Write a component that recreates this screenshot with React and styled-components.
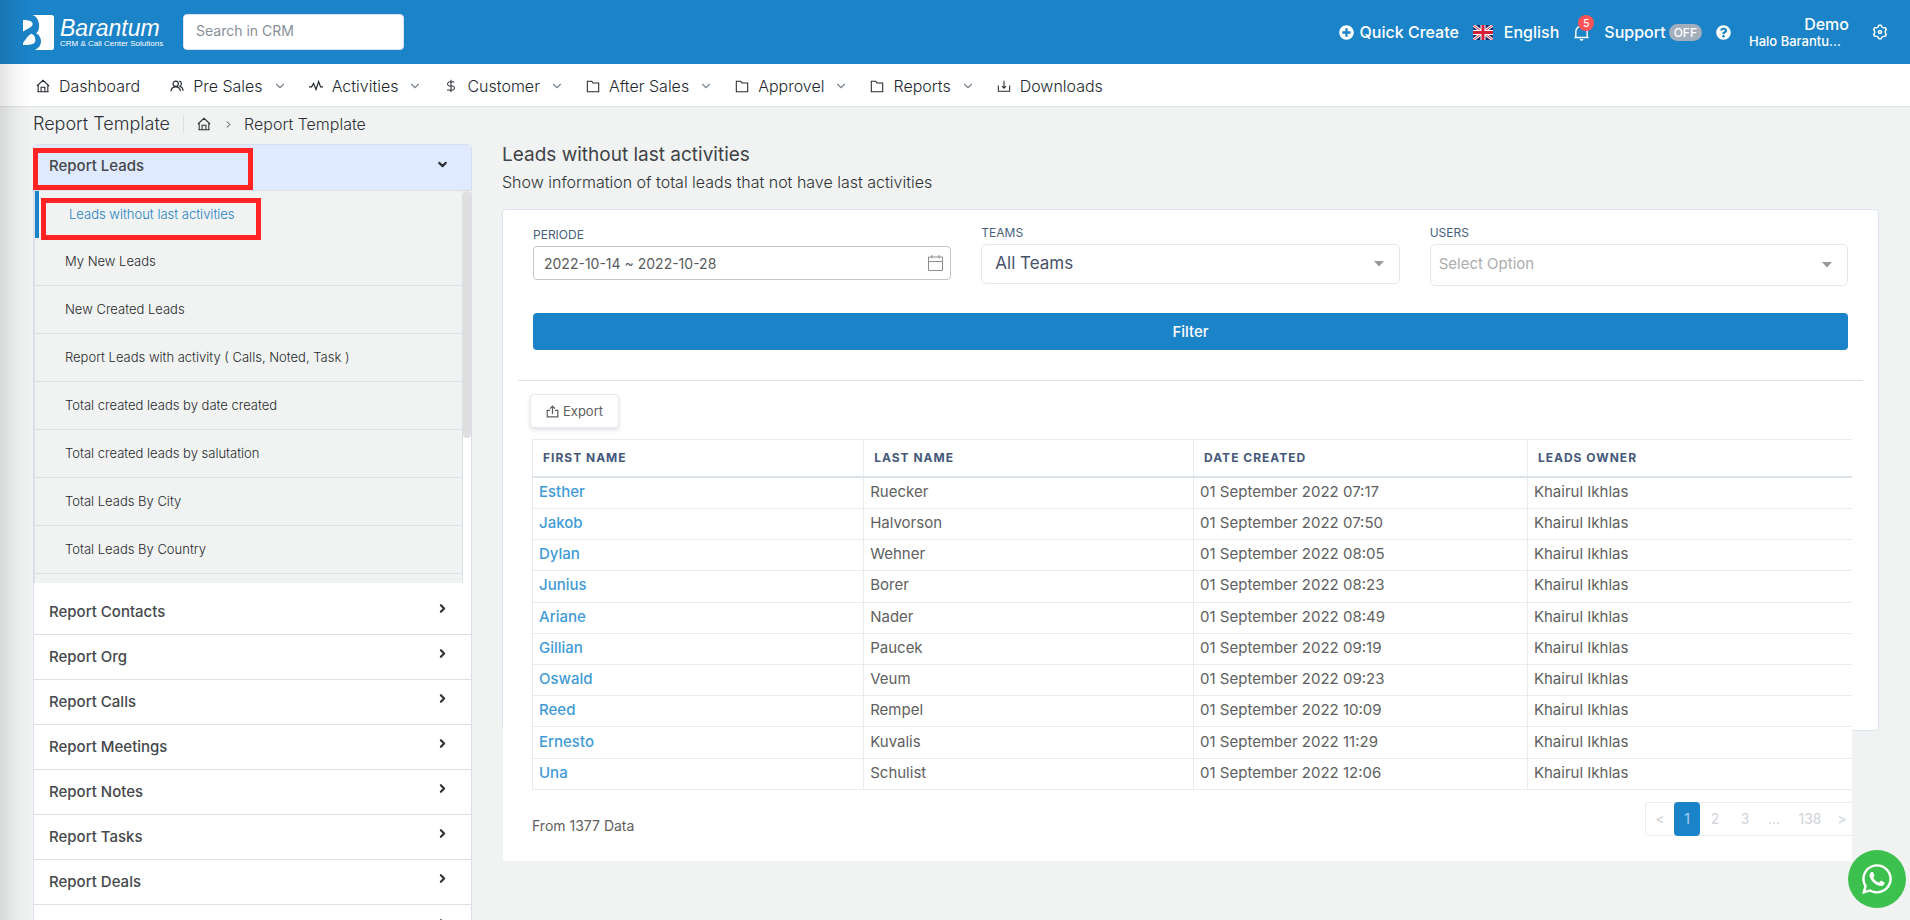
import React from "react";
import styled, { createGlobalStyle } from "styled-components";
import { FaPlusCircle, FaQuestionCircle, FaWhatsapp } from "react-icons/fa";
import { RiNotification2Line, RiSettings3Line } from "react-icons/ri";
import { LuChevronDown, LuChevronRight, LuDollarSign } from "react-icons/lu";

const GlobalStyle = createGlobalStyle`
  *, *::before, *::after { box-sizing: border-box; }
  body {
    margin: 0;
    background: #f1f3f2;
    color: #3f4347;
    font-family: Inter, "Open Sans", sans-serif;
    font-size: 15px;
    line-height: 20px;
  }
  button, input, select { font: inherit; color: inherit; margin: 0; }
  a { color: inherit; text-decoration: none; }
  h1, h2, p, ul { margin: 0; padding: 0; font-weight: inherit; }
  ul { list-style: none; }
  svg { display: block; flex: none; }
`;

const Page = styled.div`
  position: relative;
  display: flex;
  flex-direction: column;
  height: 100vh;
  overflow: hidden;
`;

const EdgeShade = styled.div`
  position: absolute;
  inset: 0 auto 0 0;
  width: 32px;
  pointer-events: none;
  background: linear-gradient(to right, rgba(0, 0, 0, 0.11), rgba(0, 0, 0, 0.03) 50%, transparent);
`;

/* ---------- top bar ---------- */

const TopBar = styled.header`
  flex: none;
  display: flex;
  align-items: center;
  height: 64px;
  padding: 0 21px 0 23px;
  background: #1b83c8;
  color: #fff;
`;

const Brand = styled.a`
  display: flex;
  align-items: center;
  gap: 6px;
  width: 160px;
`;

const BrandText = styled.span`
  display: flex;
  flex-direction: column;
  font-family: "Liberation Sans", Arial, sans-serif;
  white-space: nowrap;
`;

const BrandName = styled.span`
  font-size: 23px;
  line-height: 24px;
  font-style: italic;
`;

const BrandTag = styled.span`
  font-size: 8px;
  line-height: 8px;
`;

const Search = styled.input`
  width: 221px;
  height: 36px;
  padding: 0 12px 3px;
  border: 1px solid #dbe3ee;
  border-radius: 4px;
  background: #fff;
  color: #3f4347;
  font-size: 14px;
  &::placeholder { color: #878f9a; opacity: 1; }
`;

const Tools = styled.div`
  display: flex;
  align-items: center;
  margin-left: auto;
  font-size: 16px;
  font-weight: 500;
`;

const ToolButton = styled.button`
  position: relative;
  display: flex;
  align-items: center;
  gap: ${(p) => p.$gap || 6}px;
  padding: 0;
  margin-left: ${(p) => p.$space || 14}px;
  border: 0;
  background: none;
  cursor: pointer;
`;

const Badge = styled.span`
  position: absolute;
  top: -9px;
  left: 5px;
  width: 16px;
  height: 16px;
  border-radius: 8px;
  background: #ff5457;
  font-size: 10px;
  line-height: 16px;
  text-align: center;
`;

const Pill = styled.span`
  padding: 0 5px;
  border-radius: 9px;
  background: #a3afbd;
  font-size: 12px;
  line-height: 17px;
`;

const Account = styled.a`
  display: flex;
  flex-direction: column;
  width: 100px;
  margin-left: 18px;
  font-size: 16px;
  line-height: 18px;
  text-align: right;
`;

const Company = styled.span`
  font-size: 13px;
  line-height: 16px;
  text-align: left;
`;

/* ---------- navigation ---------- */

const Nav = styled.nav`
  flex: none;
  display: flex;
  align-items: center;
  gap: 22px;
  height: 43px;
  padding: 2px 36px 0;
  border-bottom: 1px solid #dce0e6;
  background: #fff;
  color: #24292f;
  font-size: 16px;
  font-weight: 300;
`;

const NavLink = styled.a`
  display: flex;
  align-items: center;
  white-space: nowrap;
  &:first-child { margin-right: 8px; }
  & > svg:last-child:not(:first-child) { margin-left: 10px; color: #7c8896; }
`;

const NavLabel = styled.span`
  margin-left: 9px;
`;

const Crumbs = styled.nav`
  flex: none;
  display: flex;
  align-items: center;
  height: 37px;
  padding: 0 33px 3px;
  color: #2e3236;
  font-size: 16px;
  font-weight: 300;
`;

const CrumbTitle = styled.h1`
  margin-right: 13px;
  font-size: 18px;
`;

const CrumbHome = styled.a`
  display: flex;
  padding: 2px 12px 2px 13px;
  border-left: 1px solid #dadfe3;
`;

const CrumbHere = styled.span`
  margin-left: 10px;
`;

/* ---------- sidebar ---------- */

const Body = styled.div`
  flex: 1;
  min-height: 0;
  display: flex;
  align-items: flex-start;
  gap: 30px;
  padding: 0 31px 0 33px;
`;

const Sidebar = styled.aside`
  flex: none;
  width: 439px;
  border: 1px solid #d8dfea;
  border-radius: 4px;
  background: #fff;
`;

const Group = styled.button`
  display: flex;
  align-items: center;
  justify-content: space-between;
  width: 100%;
  height: 45px;
  padding: 0 22px 0 15px;
  border: 0;
  border-bottom: 1px solid #dcdfe5;
  background: #fff;
  color: #45484c;
  font-weight: 500;
  text-align: left;
  cursor: pointer;
  & > svg { margin-bottom: 8px; color: #303236; }
`;

const OpenGroup = styled(Group)`
  height: 46px;
  padding-bottom: 3px;
  background: #e0eaff;
  & > svg { margin-bottom: 4px; }
`;

const ReportScroller = styled.div`
  display: flex;
  height: 392px;
  margin-bottom: 7px;
  overflow: hidden;
`;

const ReportList = styled.ul`
  flex: 1;
  border-left: 1px solid #dcdfe8;
  border-right: 1px solid #dcdfe8;
`;

const ReportItem = styled.li`
  height: ${(p) => (p.$active ? 47 : 48)}px;
  border-bottom: ${(p) => (p.$active ? "0" : "1px solid #dcdfe5")};
  border-left: ${(p) => (p.$active ? "4px solid #1b83c8" : "0")};
  background: #f1f3f2;
  color: ${(p) => (p.$active ? "#1b7fc2" : "#26292c")};
`;

const ReportLink = styled.a`
  display: block;
  padding: 13px 30px;
  font-size: 13px;
  font-weight: 300;
`;

const Thumb = styled.div`
  width: 8px;
  height: 247px;
  border-radius: 4px;
  background: #dfdfdf;
`;

/* Red frames that point out the menu entries. */
const Marker = styled.div`
  position: absolute;
  top: ${(p) => p.$top}px;
  left: ${(p) => p.$left}px;
  width: 220px;
  height: 42px;
  border: 5px solid #ff2323;
  pointer-events: none;
`;

/* ---------- report ---------- */

const Main = styled.main`
  flex: 1;
  min-width: 0;
`;

const Title = styled.h2`
  font-size: 19px;
  line-height: 22px;
`;

const Subtitle = styled.p`
  margin: 6px 0 17px;
  color: #2e3236;
  font-size: 16px;
  font-weight: 300;
`;

const Card = styled.section`
  border: 1px solid #dbe3ee;
  border-radius: 4px;
  background: #fff;
`;

const Filters = styled.form`
  display: grid;
  grid-template-columns: repeat(3, 1fr);
  column-gap: 30px;
  row-gap: 27px;
  margin: 0 15px;
  padding: 14px 15px 30px;
  border-bottom: 1px solid #dcdfe5;
`;

const Field = styled.div`
  display: flex;
  flex-direction: column;
  padding-top: ${(p) => p.$drop || 0}px;
`;

const Label = styled.label`
  padding-bottom: 2px;
  color: #48607c;
  font-size: 12px;
  line-height: 18px;
`;

const Control = styled.div`
  position: relative;
  & > svg { position: absolute; top: 50%; right: ${(p) => p.$inset}px; transform: translateY(-50%); pointer-events: none; }
`;

const DateInput = styled.input`
  display: block;
  width: 100%;
  height: 34px;
  padding: 0 10px;
  border: 1px solid #c4c4c4;
  border-radius: 4px;
  background: #fff;
  color: #5a5c5e;
  font-size: 14px;
`;

const Select = styled.select`
  display: block;
  appearance: none;
  width: 100%;
  height: ${(p) => (p.$empty ? 42 : 40)}px;
  padding: 0 ${(p) => (p.$empty ? 8 : 13)}px 2px;
  border: 1px solid #e6e8ea;
  border-radius: 5px;
  background: #fff;
  color: ${(p) => (p.$empty ? "#adadad" : "#47536a")};
  font-size: ${(p) => (p.$empty ? 15 : 17)}px;
`;

const FilterButton = styled.button`
  grid-column: 1 / -1;
  height: 37px;
  border: 0;
  border-radius: 4px;
  background: #1b83c8;
  color: #fff;
  font-weight: 500;
  cursor: pointer;
`;

/* The results are taller than the card and run out below it. */
const Results = styled.div`
  margin: 0 26px -131px 0;
  padding: 13px 0 25px 27px;
  background: #fff;
  color: #606060;
`;

const ExportButton = styled.button`
  display: flex;
  align-items: center;
  gap: 4px;
  height: 34px;
  padding: 0 15px;
  border: 1px solid #e6e9ee;
  border-radius: 4px;
  background: #fff;
  box-shadow: 0 2px 4px rgba(80, 90, 110, 0.18);
  font-size: 13px;
  cursor: pointer;
`;

const Table = styled.table`
  width: calc(100% - 2px);
  height: 351px;
  margin: 11px 0 0 2px;
  border-collapse: collapse;
  table-layout: fixed;
`;

const Col = styled.col`
  width: ${(p) => p.$w};
`;

const HeadCell = styled.th`
  height: 37px;
  padding: 0 10px;
  border: 1px solid #e8ebef;
  border-right: 0;
  border-bottom: 2px solid #dce2ea;
  color: #45597a;
  font-size: 12px;
  font-weight: 700;
  letter-spacing: 1px;
  text-align: left;
`;

const Cell = styled.td`
  padding: 0 6px 2px;
  border: 1px solid #e8ebef;
  border-right: 0;
`;

const NameLink = styled.a`
  color: #3f9bd6;
  font-weight: 500;
`;

const TableFoot = styled.div`
  display: flex;
  justify-content: space-between;
  align-items: flex-start;
  padding: 12px 0 0 2px;
`;

const Total = styled.p`
  padding-top: 14px;
  font-size: 14px;
`;

const Pager = styled.nav`
  display: flex;
  align-items: center;
  height: 34px;
  border: 1px solid #eaedf0;
  border-right: 0;
  border-radius: 4px 0 0 4px;
  font-size: 14px;
`;

const PageButton = styled.button`
  min-width: ${(p) => p.$w || 30}px;
  height: 34px;
  padding: 0;
  border: 0;
  border-radius: 4px;
  background: ${(p) => (p.$current ? "#1b83c8" : "transparent")};
  color: ${(p) => (p.$current ? "#a9d0ec" : "#cfd3d7")};
  cursor: pointer;
`;

const Chat = styled.a`
  position: fixed;
  right: 4px;
  bottom: 12px;
  display: flex;
  align-items: center;
  justify-content: center;
  width: 58px;
  height: 58px;
  border-radius: 50%;
  background: #3cc04e;
  color: #fff;
`;

/* ---------- drawings ---------- */

const Line = ({ size = 14, width = 1.2, children }) => (
  <svg width={size} height={size} viewBox="0 0 16 16" fill="none" stroke="currentColor" strokeWidth={width} aria-hidden="true">
    {children}
  </svg>
);

const HomeIcon = () => (
  <Line>
    <path d="M1 8 8 1.5 15 8M2.5 7v7.5h11V7M5.8 14.5V9.5h4.4v5M1.5 14.5h13" />
  </Line>
);
const PeopleIcon = () => (
  <Line width={1.3}>
    <circle cx="6.500" cy="5.500" r="3" />
    <path d="M1 14c.5-3.500 2.500-5 5.500-5s5 1.500 5.500 5M10.500 2.500c3 0 3.500 4.500.8 5.700 2.200.7 3.500 2.500 3.700 5.300" />
  </Line>
);
const FolderIcon = () => (
  <Line>
    <path d="M1.5 2.500h5l1.500 2h6.500v10h-13z" />
  </Line>
);
const PulseIcon = () => (
  <Line width={1.4}>
    <path d="M0 9h3l2.300-4L8 12l3-9 2.200 6H16" />
  </Line>
);
const DownloadIcon = () => (
  <Line>
    <path d="M1.500 7.500v6.500h13V7.500M8 2v8.500M5.500 8 8 10.500 10.500 8" />
  </Line>
);
const ExportIcon = () => (
  <Line size={13} width={1.5}>
    <path d="M5 6.500H1.500v8h13v-8H11M8 11V1.500M5 4.500l3-3 3 3" />
  </Line>
);
const CalendarIcon = () => (
  <svg width="15" height="17" viewBox="0 0 15 17" fill="none" stroke="#8c8c8c" aria-hidden="true">
    <path d="M.5 2.500h14v13.500H.5zM.5 7h14M4 .5V4M11 .5V4" />
  </svg>
);
const Caret = () => (
  <svg width="10" height="6" viewBox="0 0 10 6" aria-hidden="true">
    <path d="M0 0h10L5 5.500z" fill="#999" />
  </svg>
);
const LogoMark = () => (
  <svg width="31" height="35" viewBox="0 0 31 35" fill="#fff" aria-hidden="true">
    <path d="M9.500 0H28.500q2.500 0 2.500 2.500V32.500q0 2.500-2.500 2.500H12C16 33 18 30 18 26.500 18 22.500 16 19.800 13 18.300 15.600 16.500 16.600 13 16 9 15.400 4.500 13 1 9.500 0Z" />
    <path d="M0 5C5.500 5 9 6 9.700 8.500 10 12 5 13.500 0 16.500Z" />
    <path d="M0 30V28C2 25 5.500 20.500 8 18.800 11 19.500 12.500 22 12.300 25.500 12 29 9 30 0 30Z" />
  </svg>
);
const Flag = () => (
  <svg width="20" height="15" viewBox="0 0 20 15" aria-hidden="true">
    <path fill="#1f2f6b" d="M0 0h20v15H0z" />
    <path stroke="#fff" strokeWidth="3" d="m0 0 20 15M20 0 0 15" />
    <path stroke="#d5203c" strokeWidth="1" d="m0 0 20 15M20 0 0 15" />
    <path stroke="#fff" strokeWidth="5" d="M10 0v15M0 7.500h20" />
    <path stroke="#d5203c" strokeWidth="3" d="M10 0v15M0 7.500h20" />
  </svg>
);

/* ---------- data ---------- */

const MENU = [
  ["Dashboard", HomeIcon, false],
  ["Pre Sales", PeopleIcon, true],
  ["Activities", PulseIcon, true],
  ["Customer", () => <LuDollarSign size={14} strokeWidth={1.7} />, true],
  ["After Sales", FolderIcon, true],
  ["Approvel", FolderIcon, true],
  ["Reports", FolderIcon, true],
  ["Downloads", DownloadIcon, false],
];

const LEAD_REPORTS = [
  "Leads without last activities",
  "My New Leads",
  "New Created Leads",
  "Report Leads with activity ( Calls, Noted, Task )",
  "Total created leads by date created",
  "Total created leads by salutation",
  "Total Leads By City",
  "Total Leads By Country",
  "",
];

const GROUPS = ["Contacts", "Org", "Calls", "Meetings", "Notes", "Tasks", "Deals"];

const LEADS = [
  ["Esther", "Ruecker", "07:17"],
  ["Jakob", "Halvorson", "07:50"],
  ["Dylan", "Wehner", "08:05"],
  ["Junius", "Borer", "08:23"],
  ["Ariane", "Nader", "08:49"],
  ["Gillian", "Paucek", "09:19"],
  ["Oswald", "Veum", "09:23"],
  ["Reed", "Rempel", "10:09"],
  ["Ernesto", "Kuvalis", "11:29"],
  ["Una", "Schulist", "12:06"],
];

export default function App() {
  return (
    <Page>
      <GlobalStyle />
      <TopBar>
        <Brand href="#">
          <LogoMark />
          <BrandText>
            <BrandName>Barantum</BrandName>
            <BrandTag>CRM &amp; Call Center Solutions</BrandTag>
          </BrandText>
        </Brand>
        <Search type="search" placeholder="Search in CRM" aria-label="Search in CRM" />
        <Tools>
          <ToolButton type="button"><FaPlusCircle size={15} />Quick Create</ToolButton>
          <ToolButton type="button" aria-label="Language"><Flag /></ToolButton>
          <ToolButton type="button" $space={11}>English</ToolButton>
          <ToolButton type="button" aria-label="Notifications">
            <RiNotification2Line size={17} />
            <Badge>5</Badge>
          </ToolButton>
          <ToolButton type="button" $gap={3}>Support <Pill>OFF</Pill></ToolButton>
          <ToolButton type="button" aria-label="Help"><FaQuestionCircle size={15} /></ToolButton>
          <Account href="#">
            Demo
            <Company>Halo Barantu...</Company>
          </Account>
          <ToolButton type="button" $space={22} aria-label="Settings"><RiSettings3Line size={18} /></ToolButton>
        </Tools>
      </TopBar>

      <Nav>
        {MENU.map(([label, Icon, more]) => (
          <NavLink href="#" key={label}>
            <Icon />
            <NavLabel>{label}</NavLabel>
            {more && <LuChevronDown size={14} />}
          </NavLink>
        ))}
      </Nav>

      <Crumbs aria-label="Breadcrumb">
        <CrumbTitle>Report Template</CrumbTitle>
        <CrumbHome href="#" aria-label="Home"><HomeIcon /></CrumbHome>
        <LuChevronRight size={11} />
        <CrumbHere>Report Template</CrumbHere>
      </Crumbs>

      <Body>
        <Sidebar>
          <OpenGroup type="button">
            Report Leads
            <LuChevronDown size={13} strokeWidth={4} />
          </OpenGroup>
          <ReportScroller>
            <ReportList>
              {LEAD_REPORTS.map((name, i) => (
                <ReportItem key={name} $active={i === 0}>
                  {name && <ReportLink href="#">{name}</ReportLink>}
                </ReportItem>
              ))}
            </ReportList>
            <Thumb />
          </ReportScroller>
          {GROUPS.map((name) => (
            <Group type="button" key={name}>
              Report {name}
              <LuChevronRight size={13} strokeWidth={4} />
            </Group>
          ))}
          <Group type="button" aria-label="More reports">
            <span />
            <LuChevronRight size={13} strokeWidth={4} />
          </Group>
        </Sidebar>

        <Main>
          <Title>Leads without last activities</Title>
          <Subtitle>Show information of total leads that not have last activities</Subtitle>
          <Card>
            <Filters onSubmit={(e) => e.preventDefault()}>
              <Field $drop={2}>
                <Label htmlFor="periode">PERIODE</Label>
                <Control $inset={8}>
                  <DateInput id="periode" type="text" defaultValue="2022-10-14 ~ 2022-10-28" />
                  <CalendarIcon />
                </Control>
              </Field>
              <Field>
                <Label htmlFor="teams">TEAMS</Label>
                <Control $inset={16}>
                  <Select id="teams"><option>All Teams</option></Select>
                  <Caret />
                </Control>
              </Field>
              <Field>
                <Label htmlFor="users">USERS</Label>
                <Control $inset={16}>
                  <Select id="users" $empty><option>Select Option</option></Select>
                  <Caret />
                </Control>
              </Field>
              <FilterButton type="submit">Filter</FilterButton>
            </Filters>

            <Results>
              <ExportButton type="button"><ExportIcon />Export</ExportButton>
              <Table>
                <colgroup>
                  <Col $w="25.1%" /><Col $w="25%" /><Col $w="25.3%" /><Col />
                </colgroup>
                <thead>
                  <tr>
                    <HeadCell>FIRST NAME</HeadCell>
                    <HeadCell>LAST NAME</HeadCell>
                    <HeadCell>DATE CREATED</HeadCell>
                    <HeadCell>LEADS OWNER</HeadCell>
                  </tr>
                </thead>
                <tbody>
                  {LEADS.map(([first, last, time]) => (
                    <tr key={first}>
                      <Cell><NameLink href="#">{first}</NameLink></Cell>
                      <Cell>{last}</Cell>
                      <Cell>01 September 2022 {time}</Cell>
                      <Cell>Khairul Ikhlas</Cell>
                    </tr>
                  ))}
                </tbody>
              </Table>
              <TableFoot>
                <Total>From 1377 Data</Total>
                <Pager aria-label="Pages">
                  <PageButton type="button" $w={28}>&lt;</PageButton>
                  <PageButton type="button" $w={26} $current>1</PageButton>
                  <PageButton type="button">2</PageButton>
                  <PageButton type="button">3</PageButton>
                  <PageButton type="button" $w={28}>...</PageButton>
                  <PageButton type="button" $w={44}>138</PageButton>
                  <PageButton type="button" $w={20}>&gt;</PageButton>
                </Pager>
              </TableFoot>
            </Results>
          </Card>
        </Main>
      </Body>

      <EdgeShade />
      <Marker $top={148} $left={33} />
      <Marker $top={198} $left={41} />
      <Chat href="#" aria-label="WhatsApp"><FaWhatsapp size={34} /></Chat>
    </Page>
  );
}
